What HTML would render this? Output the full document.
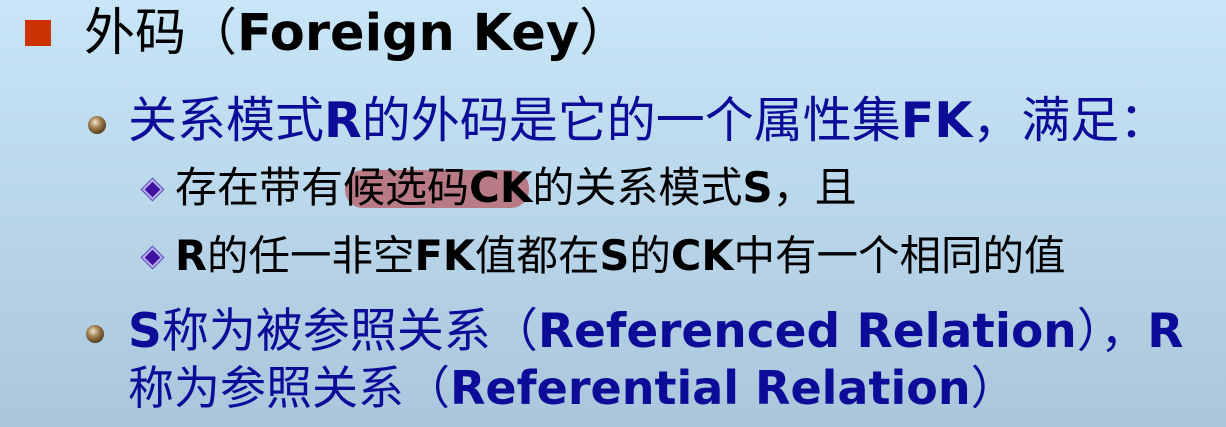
<!DOCTYPE html>
<html><head><meta charset="utf-8"><style>
html,body{margin:0;padding:0}
body{width:1226px;height:427px;overflow:hidden;position:relative;background:linear-gradient(#c8e6f8,#aac6dc);font-family:"DejaVu Sans","Noto Sans CJK SC",sans-serif}
.l{position:absolute;white-space:nowrap;line-height:1}
b{font-weight:bold}
.blue{color:#0c0c98}
.ball{position:absolute;width:18px;height:18px;border-radius:50%;background:radial-gradient(circle at 40% 35%,#f4e8d0 0,#a08050 35%,#4a3418 80%,#2a1a08 100%)}
.dia{position:absolute;width:11px;height:11px;transform:rotate(45deg);background:#4010a0;border:2px solid #b8b0f0;outline:1px solid #6050c0}
.hl{position:absolute;left:345px;top:170px;width:184px;height:38px;background:#b87a84;border-radius:18px}
</style></head><body>
<div style="position:absolute;left:25px;top:20px;width:26px;height:26px;background:#cc3300"></div>
<div class="l" style="left:84px;top:8px;font-size:51px;color:#000">外码（<b>Foreign Key</b>）</div>
<div class="ball" style="left:88px;top:116px"></div>
<div class="l blue" style="left:128px;top:96px;font-size:49px">关系模式<b>R</b>的外码是它的一个属性集<b>FK</b>，满足：</div>
<div class="dia" style="left:145px;top:182px"></div>
<div class="hl"></div>
<div class="l" style="left:175px;top:167px;font-size:42px;color:#000">存在带有候选码<b>CK</b>的关系模式<b>S</b>，且</div>
<div class="dia" style="left:145px;top:250px"></div>
<div class="l" style="left:175px;top:235px;font-size:41.5px;color:#000"><b>R</b>的任一非空<b>FK</b>值都在<b>S</b>的<b>CK</b>中有一个相同的值</div>
<div class="ball" style="left:86px;top:325px"></div>
<div class="l blue" style="left:128px;top:308px;font-size:47px"><b>S</b>称为被参照关系（<b>Referenced Relation</b>），<b>R</b></div>
<div class="l blue" style="left:128px;top:365px;font-size:46px">称为参照关系（<b>Referential Relation</b>）</div>
</body></html>
